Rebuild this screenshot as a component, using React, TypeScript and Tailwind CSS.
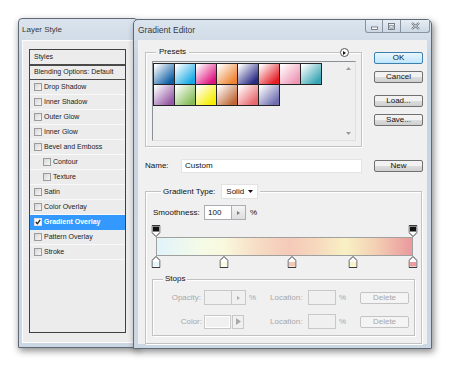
import clsx from "clsx";

const swatchRow1 = [
  "bg-[linear-gradient(135deg,#ffffff_5%,#0f5fa6_85%)]",
  "bg-[linear-gradient(135deg,#ffffff_5%,#17a9e6_85%)]",
  "bg-[linear-gradient(135deg,#ffffff_5%,#e0137f_85%)]",
  "bg-[linear-gradient(135deg,#ffffff_5%,#ee8431_85%)]",
  "bg-[linear-gradient(135deg,#ffffff_5%,#2a2a86_85%)]",
  "bg-[linear-gradient(135deg,#ffffff_5%,#e31e25_85%)]",
  "bg-[linear-gradient(135deg,#ffffff_5%,#ee97b4_85%)]",
  "bg-[linear-gradient(135deg,#ffffff_5%,#37a5b3_85%)]",
];

const swatchRow2 = [
  "bg-[linear-gradient(135deg,#ffffff_5%,#9559a6_85%)]",
  "bg-[linear-gradient(135deg,#ffffff_5%,#86bd5a_85%)]",
  "bg-[linear-gradient(135deg,#ffffff_5%,#f7ee00_85%)]",
  "bg-[linear-gradient(135deg,#ffffff_5%,#bf6836_85%)]",
  "bg-[linear-gradient(135deg,#ffffff_5%,#e8686c_85%)]",
  "bg-[linear-gradient(135deg,#ffffff_5%,#6e6eb0_85%)]",
];

const styleRows = [
  { label: "Drop Shadow" },
  { label: "Inner Shadow" },
  { label: "Outer Glow" },
  { label: "Inner Glow" },
  { label: "Bevel and Emboss" },
  { label: "Contour", sub: true },
  { label: "Texture", sub: true },
  { label: "Satin" },
  { label: "Color Overlay" },
  { label: "Gradient Overlay", active: true },
  { label: "Pattern Overlay" },
  { label: "Stroke" },
];

const colorStops = [
  { pos: 0, color: "#e6f5fc" },
  { pos: 26.5, color: "#fafde4" },
  { pos: 53, color: "#f5c6b2" },
  { pos: 76.5, color: "#f9f3c6" },
  { pos: 100, color: "#ec9ca1" },
];

const Check = ({ checked }: { checked?: boolean }) => (
  <span
    className={clsx(
      "w-[8px] h-[8px] border shrink-0 flex items-center justify-center",
      checked
        ? "bg-white border-[#e0e0e0]"
        : "border-[#9a9a9a] bg-[linear-gradient(135deg,#d6d6d6,#f7f7f7)]"
    )}
  >
    {checked && (
      <svg width="6" height="6" viewBox="0 0 6 6">
        <path d="M0.8 3 L2.4 4.8 L5.2 0.8" stroke="#1a1a1a" strokeWidth="1.3" fill="none" />
      </svg>
    )}
  </span>
);

const LayerStyle = () => {
  return (
    <div className="absolute left-[18px] top-[18px] w-[120px] h-[330px] rounded-t-[4px] border border-[#5f6a76] bg-[linear-gradient(#dbe4ee,#c7d4e1_40px,#cbd7e3)] shadow-[1px_3px_7px_rgba(0,0,0,0.45)] flex flex-col">
      <div className="h-[21px] pl-[3px] flex items-center text-[8px] text-[#3a3a3a]">Layer Style</div>
      <div className="flex-1 mx-[3px] mb-[4px] bg-[#ececec] border border-[#fdfdfd] pt-[8px] pl-[6px]">
        <div className="w-[97px] h-[284px] border border-[#404040] bg-[#ececec] text-[7px] text-[#222]">
          <div className="h-[16px] pl-[4px] flex items-center border-b-2 border-[#4a4a4a]">Styles</div>
          <div className="h-[14px] pl-[4px] flex items-center border-b border-[#4a4a4a]">Blending Options: Default</div>
          {styleRows.map((row) => (
            <div
              key={row.label}
              className={clsx(
                "h-[15px] flex items-center gap-[2px] border-b",
                row.sub ? "pl-[13px]" : "pl-[4px]",
                row.active ? "bg-[#3399ff] text-white font-bold border-[#3399ff]" : "border-[#f9f9f9]"
              )}
            >
              <Check checked={row.active} />
              <span>{row.label}</span>
            </div>
          ))}
        </div>
      </div>
    </div>
  );
};

const Btn = ({ text, primary, disabled }: { text: string; primary?: boolean; disabled?: boolean }) => (
  <div
    className={clsx(
      "w-[49px] h-[12px] rounded-[2px] border flex items-center justify-center text-[8px] leading-none",
      primary && "border-[#3c7fb1] bg-[linear-gradient(#eaf6fd,#bee6fd)] text-[#111]",
      !primary && !disabled && "border-[#707070] bg-[linear-gradient(#f2f2f2_45%,#dcdcdc_55%,#cfcfcf)] text-[#111]",
      disabled && "border-[#c4c4c4] bg-[#f4f4f4] text-[#a8a8a8]"
    )}
  >
    {text}
  </div>
);

const Spin = ({ disabled }: { disabled?: boolean }) => (
  <span
    className={clsx(
      "w-[14px] h-[15px] border border-l-0 flex items-center justify-center",
      disabled ? "border-[#c8c8c8] bg-[#f0f0f0]" : "border-[#abadb3] bg-[linear-gradient(#f4f4f4,#dedede)]"
    )}
  >
    <svg width="3" height="4" viewBox="0 0 3 4">
      <path d="M0 0 L3 2 L0 4 Z" fill={disabled ? "#b0b0b0" : "#7a7a7a"} />
    </svg>
  </span>
);

const OpacityStop = () => (
  <svg width="9" height="12" viewBox="0 0 9 12">
    <path d="M0.5 0.5 H8.5 V7.5 L4.5 11.5 L0.5 7.5 Z" fill="#fff" stroke="#3a3a3a" />
    <rect x="1.5" y="1.5" width="6" height="5" fill="#111" />
  </svg>
);

const ColorStop = ({ color }: { color: string }) => (
  <svg width="9" height="12" viewBox="0 0 9 12">
    <path d="M4.5 0.5 L8.5 4.5 V11.5 H0.5 V4.5 Z" fill="#fff" stroke="#3a3a3a" />
    <rect x="1.5" y="6" width="6" height="4.5" fill={color} />
  </svg>
);

const etched = "border border-[#c2c2c2] shadow-[inset_1px_1px_0_#ffffff,1px_1px_0_#ffffff]";

const GradientEditor = () => {
  return (
    <div className="absolute left-[133px] top-[19px] w-[299px] h-[330px] rounded-t-[5px] border border-[#5f6a76] bg-[linear-gradient(#dbe4ee,#c7d4e1_40px,#cbd7e3)] shadow-[2px_3px_7px_rgba(0,0,0,0.45)] flex flex-col">
      {/* title bar */}
      <div className="h-[20px] flex justify-between items-start">
        <span className="ml-[4px] mt-[5px] text-[8.5px] leading-[10px] text-[#3a3a3a]">Gradient Editor</span>
        <div className="mr-[1px] h-[13px] flex rounded-b-[3px] border border-t-0 border-[#8893a0] bg-[linear-gradient(#e6edf4,#ccd8e4)] overflow-hidden">
          <span className="w-[17px] flex items-center justify-center border-r border-[#8893a0]">
            <svg width="7" height="7" viewBox="0 0 7 7">
              <rect x="0.5" y="4" width="6" height="2.5" fill="#fff" stroke="#5d6670" strokeWidth="0.8" />
            </svg>
          </span>
          <span className="w-[18px] flex items-center justify-center border-r border-[#8893a0]">
            <svg width="7" height="7" viewBox="0 0 7 7">
              <rect x="0.5" y="0.5" width="6" height="6" fill="#fff" stroke="#5d6670" strokeWidth="0.8" />
              <rect x="1.8" y="2.2" width="3.4" height="3" fill="#d8e0e8" stroke="#5d6670" strokeWidth="0.6" />
            </svg>
          </span>
          <span className="w-[28px] flex items-center justify-center">
            <svg width="9" height="8" viewBox="0 0 9 8">
              <path d="M1 1 L8 7 M8 1 L1 7" stroke="#5d6670" strokeWidth="2.2" />
              <path d="M1 1 L8 7 M8 1 L1 7" stroke="#ffffff" strokeWidth="0.8" />
            </svg>
          </span>
        </div>
      </div>

      {/* content */}
      <div className="flex-1 mx-[4px] mb-[4px] bg-[#f0f0f0] pt-[12px] pl-[7px] text-[8px] leading-[10px]">
        <div className="flex">
          {/* presets */}
          <div className={clsx("relative w-[217px] h-[95px]", etched)}>
            <span className="absolute left-[10px] -top-[6px] px-[3px] bg-[#f0f0f0] text-[#111]">Presets</span>
            <span className="absolute right-[12px] -top-[5px] w-[9px] h-[9px] rounded-full border border-[#555] bg-white flex items-center justify-center">
              <svg width="3" height="4" viewBox="0 0 3 4">
                <path d="M0 0 L3 2 L0 4 Z" fill="#111" />
              </svg>
            </span>
            <div className="ml-[6px] mt-[8px] w-[204px] h-[80px] border border-[#8b8f96] border-r-[#e0e0e0] border-b-[#e0e0e0] bg-[#efefef] flex">
              <div className="flex-1 pt-[1px] pl-[0px]">
                <div className="flex">
                  {swatchRow1.map((c) => (
                    <div key={c} className={clsx("w-[22px] h-[22px] border border-[#222] -mr-px", c)} />
                  ))}
                </div>
                <div className="flex -mt-px">
                  {swatchRow2.map((c) => (
                    <div key={c} className={clsx("w-[22px] h-[22px] border border-[#222] -mr-px", c)} />
                  ))}
                </div>
              </div>
              <div className="w-[13px] flex flex-col justify-between items-center py-[5px]">
                <svg width="5" height="3" viewBox="0 0 5 3">
                  <path d="M0 3 L2.5 0 L5 3 Z" fill="#9a9a9a" />
                </svg>
                <svg width="5" height="3" viewBox="0 0 5 3">
                  <path d="M0 0 L2.5 3 L5 0 Z" fill="#9a9a9a" />
                </svg>
              </div>
            </div>
          </div>

          {/* buttons */}
          <div className="ml-[12px] flex flex-col">
            <Btn text="OK" primary />
            <div className="mt-[7px]">
              <Btn text="Cancel" />
            </div>
            <div className="mt-[12px]">
              <Btn text="Load..." />
            </div>
            <div className="mt-[7px]">
              <Btn text="Save..." />
            </div>
          </div>
        </div>

        {/* name row */}
        <div className="mt-[12px] flex items-center">
          <span className="w-[36px] text-[#111]">Name:</span>
          <div className="w-[181px] h-[14px] bg-white border border-[#e4e4e4] flex items-center pl-[3px] text-[#111]">Custom</div>
          <div className="ml-[12px]">
            <Btn text="New" />
          </div>
        </div>

        {/* gradient type */}
        <div className={clsx("relative mt-[18px] w-[277px] h-[153px]", etched)}>
          <div className="absolute left-[15px] -top-[8px] px-[2px] bg-[#f0f0f0] flex items-center gap-[6px]">
            <span className="text-[#111]">Gradient Type:</span>
            <div className="w-[37px] h-[15px] bg-white border border-[#e2e2e2] flex items-center justify-between pl-[4px] pr-[4px] text-[#111]">
              <span>Solid</span>
              <svg width="5" height="3" viewBox="0 0 5 3">
                <path d="M0 0 L2.5 3 L5 0 Z" fill="#111" />
              </svg>
            </div>
          </div>

          <div className="mt-[13px] pl-[7px] flex items-center">
            <span className="w-[51px] text-[#111]">Smoothness:</span>
            <div className="w-[28px] h-[15px] bg-white border border-[#abadb3] flex items-center pl-[3px] text-[#111]">100</div>
            <Spin />
            <span className="ml-[4px] text-[#111]">%</span>
          </div>

          {/* gradient bar */}
          <div className="ml-[10px] mt-[5px] w-[257px]">
            <div className="relative h-[12px]">
              <span className="absolute left-0 top-0 -translate-x-1/2">
                <OpacityStop />
              </span>
              <span className="absolute left-full top-0 -translate-x-1/2">
                <OpacityStop />
              </span>
            </div>
            <div className="h-[19px] border border-[#a0a0a0] bg-[linear-gradient(90deg,#e1f3fc_0%,#f5fbe6_18%,#f8f9de_26%,#f6dcc3_40%,#f5c9b8_52%,#f6d8bd_62%,#f8f1c4_74%,#f3cfb3_86%,#ea989d_100%)]" />
            <div className="relative h-[12px]">
              {colorStops.map((s) => (
                <span key={s.pos} className="absolute top-0 -translate-x-1/2" style={{ left: `${s.pos}%` }}>
                  <ColorStop color={s.color} />
                </span>
              ))}
            </div>
          </div>

          {/* stops */}
          <div className={clsx("relative ml-[6px] mt-[11px] w-[263px] h-[57px] text-[#a8a8a8]", etched)}>
            <span className="absolute left-[10px] -top-[6px] px-[2px] bg-[#f0f0f0] text-[#111]">Stops</span>
            <div className="mt-[10px] flex items-center">
              <span className="w-[51px] pr-[3px] text-right">Opacity:</span>
              <div className="w-[66px] flex items-center">
                <div className="w-[28px] h-[15px] border border-[#c8c8c8] bg-[#f0f0f0]" />
                <Spin disabled />
                <span className="ml-[3px]">%</span>
              </div>
              <span className="w-[38px]">Location:</span>
              <div className="w-[28px] h-[15px] border border-[#c8c8c8] bg-[#f0f0f0]" />
              <span className="w-[24px] pl-[3px]">%</span>
              <Btn text="Delete" disabled />
            </div>
            <div className="mt-[9px] flex items-center">
              <span className="w-[51px] pr-[2px] text-right">Color:</span>
              <div className="w-[66px] flex items-center">
                <div className="w-[27px] h-[14px] border border-[#c8c8c8] bg-[#f0f0f0] shadow-[inset_0_0_0_1px_#ffffff]" />
                <span className="ml-[1px] w-[12px] h-[14px] border border-[#c8c8c8] bg-[#f0f0f0] flex items-center justify-center">
                  <svg width="5" height="7" viewBox="0 0 5 7">
                    <path d="M0 0 L5 3.5 L0 7 Z" fill="#a8a8a8" />
                  </svg>
                </span>
              </div>
              <span className="w-[38px]">Location:</span>
              <div className="w-[28px] h-[15px] border border-[#c8c8c8] bg-[#f0f0f0]" />
              <span className="w-[24px] pl-[3px]">%</span>
              <Btn text="Delete" disabled />
            </div>
          </div>
        </div>
      </div>
    </div>
  );
};

export default function App() {
  return (
    <div className="relative w-[450px] h-[366px] overflow-hidden bg-white font-['Liberation_Sans',Arial,sans-serif] text-[#1e1e1e]">
      <LayerStyle />
      <GradientEditor />
    </div>
  );
}
